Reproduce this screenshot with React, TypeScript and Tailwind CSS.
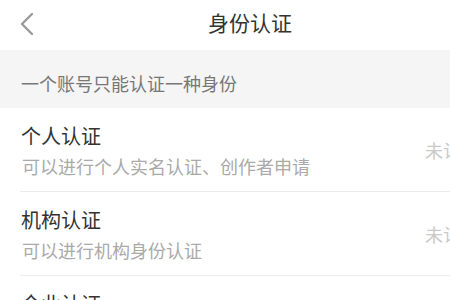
const items = [
  { title: "个人认证", desc: "可以进行个人实名认证、创作者申请", status: "未认证" },
  { title: "机构认证", desc: "可以进行机构身份认证", status: "未认证" },
  { title: "企业认证", desc: "可以进行企业身份认证", status: "未认证" },
];

export default function App() {
  return (
    <div
      className="w-[450px] h-[300px] overflow-hidden bg-white"
      style={{ fontFamily: '"Noto Sans CJK SC", "Noto Sans", sans-serif' }}
    >
      <div className="w-[500px]">
        <div className="relative h-[50px] flex items-center justify-center">
          <svg
            className="absolute left-[18px] top-[12px]"
            width="18"
            height="24"
            viewBox="0 0 18 24"
            fill="none"
          >
            <path d="M14 2 L4 12 L14 22" stroke="#9a9a9a" strokeWidth="2.4" strokeLinecap="round" strokeLinejoin="round" />
          </svg>
          <span className="text-[21px] text-[#333] leading-none -mt-[6px]">身份认证</span>
        </div>

        <div className="h-[58px] bg-[#f5f5f5] flex items-center px-[21px] pt-[8px]">
          <span className="text-[18px] text-[#777] leading-none">一个账号只能认证一种身份</span>
        </div>

        <div className="pl-[20px]">
          {items.map((it) => (
            <div key={it.title} className="h-[84px] flex items-center border-b border-[#ececec]">
              <div className="flex-1 pt-[2px]">
                <div className="text-[20px] text-[#333] leading-none pl-px">{it.title}</div>
                <div className="text-[18px] text-[#aaa] leading-none mt-[11px] pl-[2px]">{it.desc}</div>
              </div>
              <span className="text-[18px] text-[#cacaca] leading-none mr-[21px]">{it.status}</span>
            </div>
          ))}
        </div>
      </div>
    </div>
  );
}
